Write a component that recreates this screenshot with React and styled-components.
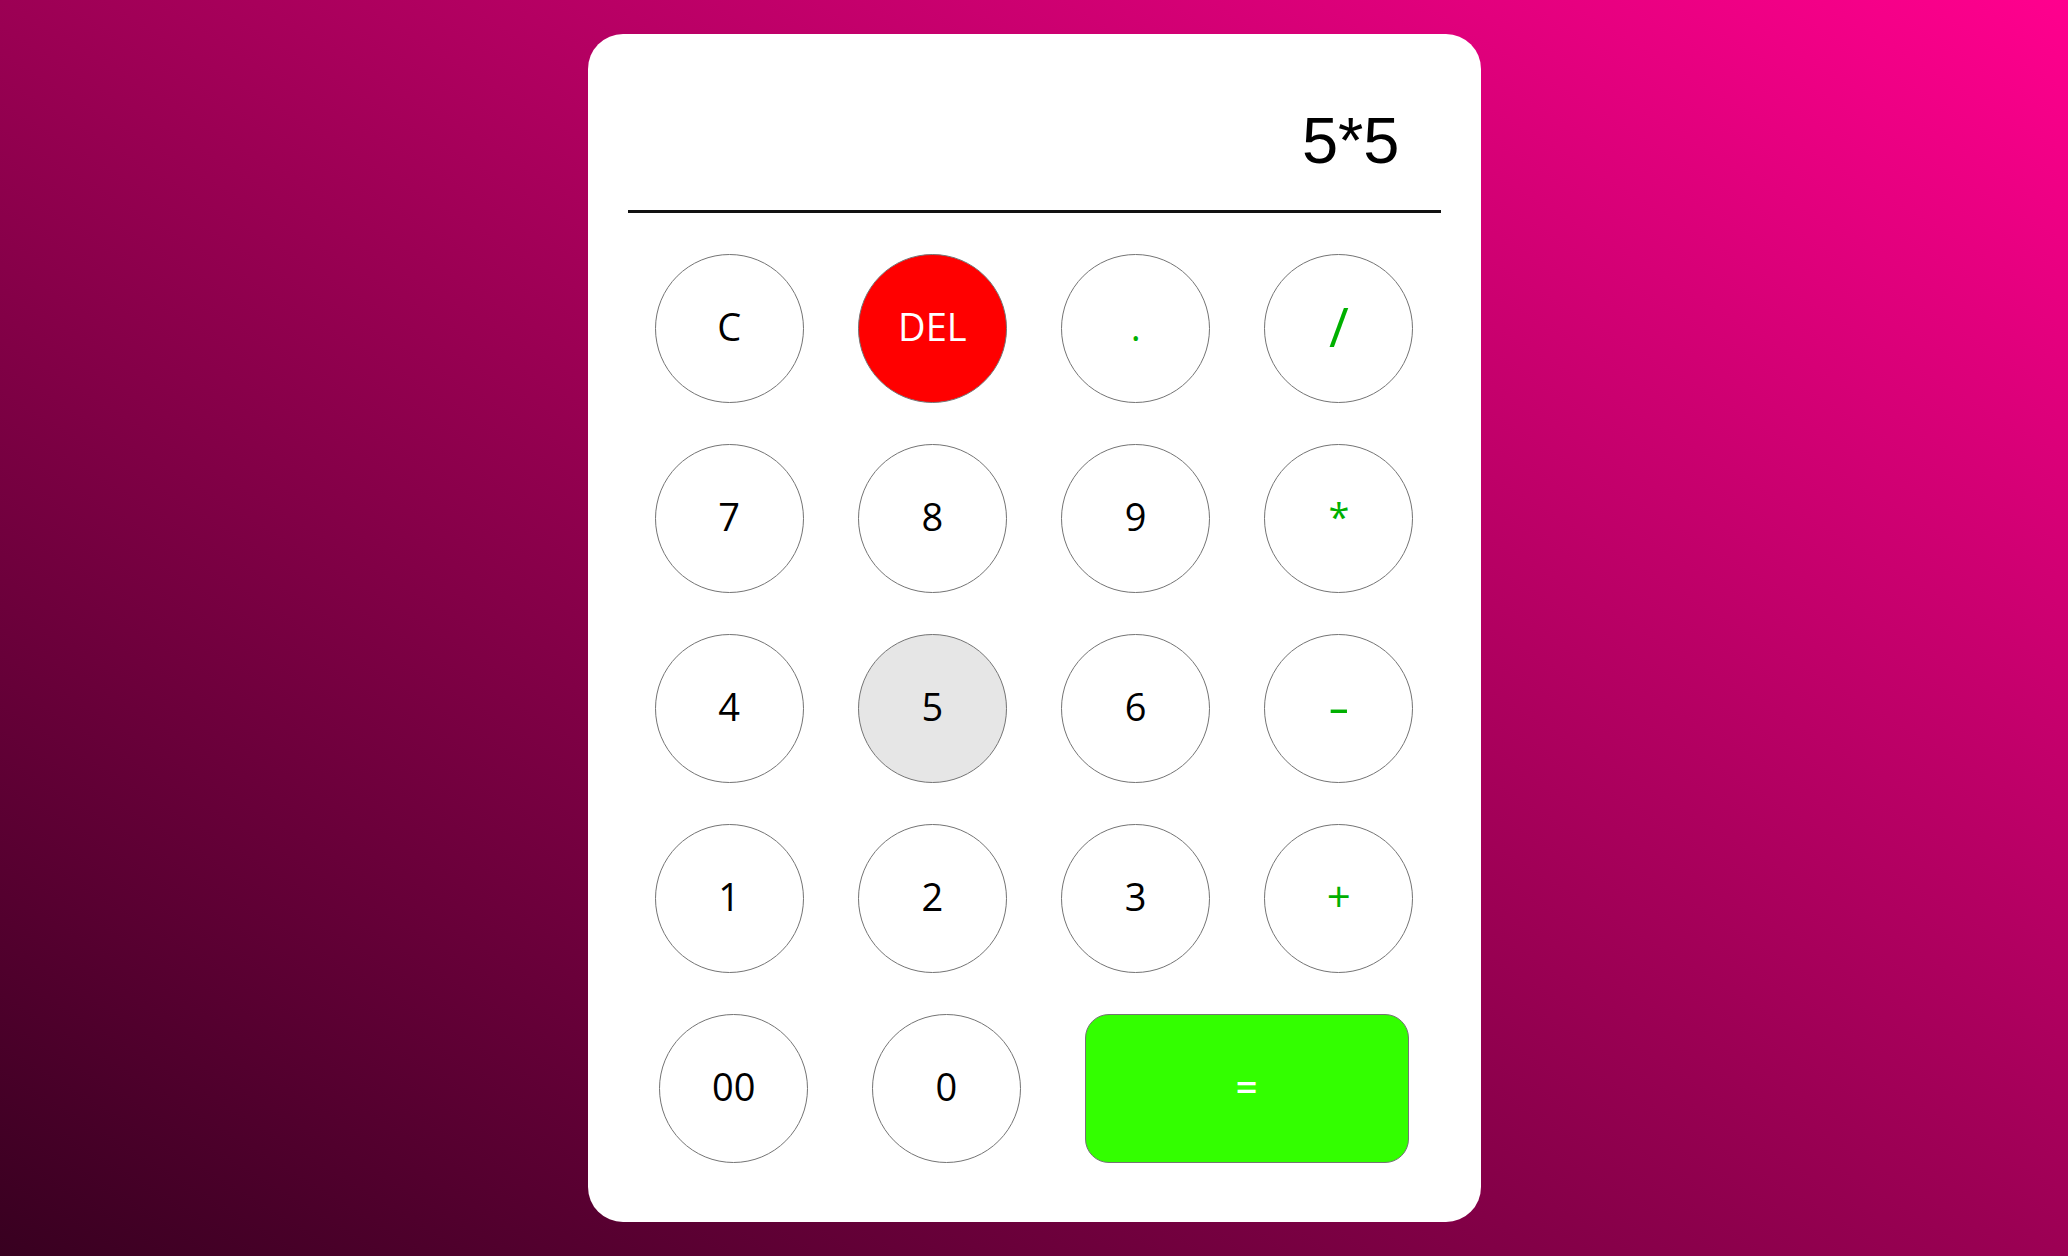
import React from "react";
import styled, { createGlobalStyle } from "styled-components";

const GlobalStyle = createGlobalStyle`
  html, body {
    margin: 0;
    padding: 0;
    height: 100%;
  }
  body {
    background: linear-gradient(to top right, #380020 0%, #9c0054 50%, #ff008e 100%);
    font-family: "Open Sans", sans-serif;
  }
  #root {
    min-height: 100vh;
  }
`;

const Page = styled.div`
  width: 100vw;
  height: 100vh;
  display: flex;
  align-items: center;
  justify-content: center;
`;

const Card = styled.div`
  width: 893px;
  box-sizing: border-box;
  background: #ffffff;
  border-radius: 35px;
  padding: 0 40px 59px;
  display: flex;
  flex-direction: column;
`;

const Display = styled.div`
  padding: 70px 41px 32px;
  border-bottom: 3px solid #111;
  text-align: right;
  font-family: "Liberation Sans", Arial, sans-serif;
  font-size: 65px;
  line-height: 74px;
  color: #000;
`;

const Keypad = styled.div`
  display: flex;
  flex-direction: column;
  gap: 41px;
  padding-top: 41px;
`;

const Row = styled.div`
  display: flex;
  justify-content: space-around;
  align-items: center;
`;

const variants = {
  plain: { bg: "#ffffff", fg: "#000000" },
  op: { bg: "#ffffff", fg: "#00b000" },
  del: { bg: "#ff0000", fg: "#ffffff" },
  active: { bg: "#e6e6e6", fg: "#000000" },
  equals: { bg: "#33ff00", fg: "#ffffff" },
};

const Key = styled.button`
  box-sizing: border-box;
  width: ${(p) => (p.$wide ? "324px" : "149px")};
  height: 149px;
  border-radius: ${(p) => (p.$wide ? "24px" : "50%")};
  border: 1.6px solid #747474;
  background: ${(p) => variants[p.$variant].bg};
  color: ${(p) => variants[p.$variant].fg};
  font-family: "Open Sans", sans-serif;
  font-size: ${(p) => p.$size || 38}px;
  font-weight: ${(p) => p.$weight || 400};
  transform: none;
  display: flex;
  align-items: center;
  justify-content: center;
  padding: 0 0 6px;
  cursor: pointer;
`;

const Glyph = styled.span`
  display: inline-block;
  transform: ${(p) => (p.$stretch ? `scaleX(${p.$stretch})` : "none")};
`;

const rows = [
  [
    { label: "C", v: "plain" },
    { label: "DEL", v: "del" },
    { label: ".", v: "op" },
    { label: "/", v: "op", size: 54 },
  ],
  [
    { label: "7", v: "plain" },
    { label: "8", v: "plain" },
    { label: "9", v: "plain" },
    { label: "*", v: "op" },
  ],
  [
    { label: "4", v: "plain" },
    { label: "5", v: "active" },
    { label: "6", v: "plain" },
    { label: "-", v: "op", size: 48, stretch: 1.4 },
  ],
  [
    { label: "1", v: "plain" },
    { label: "2", v: "plain" },
    { label: "3", v: "plain" },
    { label: "+", v: "op", size: 42 },
  ],
  [
    { label: "00", v: "plain" },
    { label: "0", v: "plain" },
    { label: "=", v: "equals", wide: true, weight: 600 },
  ],
];

export default function App() {
  return (
    <>
      <GlobalStyle />
      <Page>
        <Card>
          <Display>5*5</Display>
          <Keypad>
            {rows.map((row, i) => (
              <Row key={i}>
                {row.map((k) => (
                  <Key
                    key={k.label}
                    $variant={k.v}
                    $wide={k.wide}
                    $size={k.size}
                    $weight={k.weight}
                  >
                    <Glyph $stretch={k.stretch}>{k.label}</Glyph>
                  </Key>
                ))}
              </Row>
            ))}
          </Keypad>
        </Card>
      </Page>
    </>
  );
}
